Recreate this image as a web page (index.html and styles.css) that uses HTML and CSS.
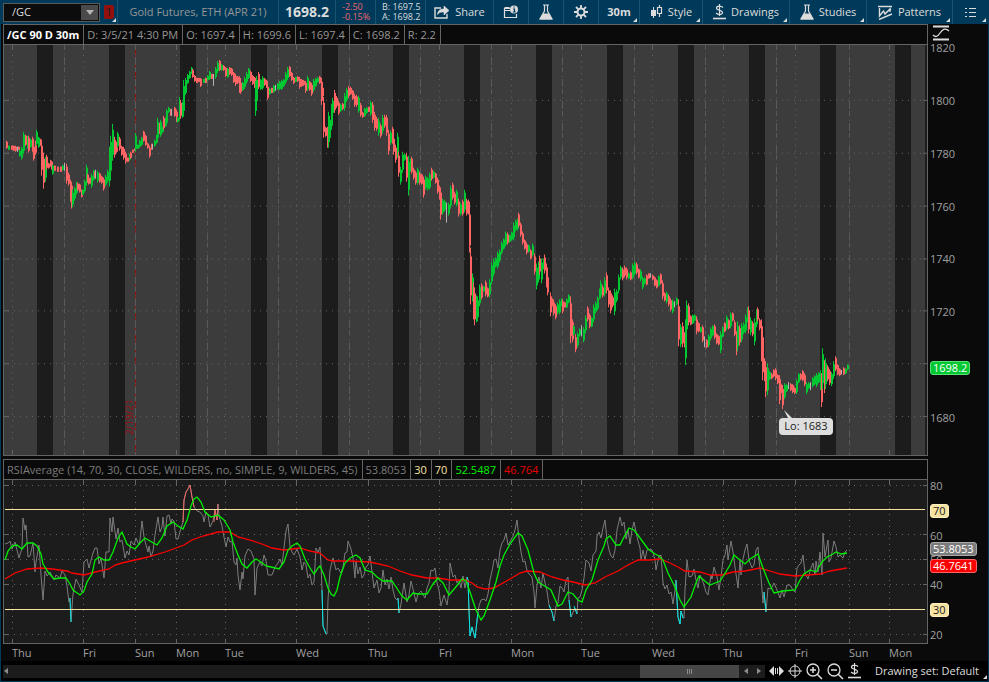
FILE: index.html
```html
<!DOCTYPE html>
<html lang="en">

<head>
    <meta charset="UTF-8">
    <meta name="viewport" content="width=device-width, initial-scale=1.0">
    <title>/GC 90 D 30m</title>
    <link rel="stylesheet" href="styles.css">
</head>

<body>

    <header class="toolbar">
        <div class="symbol-cell">
            <div class="symbol">
                <input type="text" value="/GC" aria-label="Symbol">
                <button aria-label="Symbol list"><svg width="8" height="5"><path d="M0 0h8L4 5z" fill="#b4b4b4"/></svg></button>
            </div>
            <button class="link-badge menu" aria-label="Link color 1"><span>1</span></button>
        </div>
        <div class="cell name">Gold Futures, ETH (APR 21)</div>
        <div class="cell last">1698.2</div>
        <div class="cell two-line change"><span>-2.50</span><span>-0.15%</span></div>
        <div class="cell two-line"><span>B: 1697.5</span><span>A: 1698.2</span></div>
        <button class="cell">
            <svg width="16" height="14" fill="none" stroke="#dcdcdc"><path d="M7 3H1v10h12V9" stroke-width="1.4"/><path d="M3.500 9.500C4 5 6.500 4 10 4V1l5 4.500-5 4.500V7C7 7 5.500 7 3.500 9.500z" fill="#dcdcdc" stroke-width=".6"/></svg>
            Share
        </button>
        <button class="cell" aria-label="Info">
            <svg width="16" height="14" fill="none" stroke="#dcdcdc"><path d="M7 3.500H1.500V12.500h12V9M1.500 2.500h5M1.500 5.500h6" stroke-width="1.200"/><circle cx="11" cy="4.500" r="4" fill="#dcdcdc" stroke="none"/><path d="M10 4h1.500v3M9.800 7h3M10.500 2h1.200" stroke="#003a5a" stroke-width="1.200"/></svg>
        </button>
        <button class="cell" aria-label="Lab">
            <svg width="14" height="16" fill="none" stroke="#dcdcdc"><path d="M4 1h6M5.500 1v6L1 15h12L8.500 7V1" stroke-width="1.200"/><path d="M4 10h6l3 5H1z" fill="#dcdcdc"/></svg>
        </button>
        <button class="cell" aria-label="Settings">
            <svg width="14" height="14" fill="none" stroke="#dcdcdc"><circle cx="7" cy="7" r="3.500" stroke-width="2"/><path d="M7 0v3M7 11v3M0 7h3M11 7h3M2 2l2.200 2.200M9.800 9.800L12 12M12 2L9.800 4.200M4.200 9.800L2 12" stroke-width="1.800"/></svg>
        </button>
        <button class="cell menu period">30m</button>
        <button class="cell menu">
            <svg width="13" height="14" fill="none" stroke="#dcdcdc"><path d="M3.500 2v11" stroke-width="1"/><path d="M1 5h5v6H1z" fill="#dcdcdc" stroke="none"/><path d="M9.500 0v2M9.500 9v3M7.500 2.500h4v6h-4z" stroke-width="1.200"/></svg>
            Style
        </button>
        <button class="cell menu">
            <svg width="13" height="16" fill="none" stroke="#dcdcdc"><path d="M10 3.500C8 1.500 3.500 1.500 3.500 4c0 3 6 1.500 6 4.500 0 2.500-4.500 2.500-6.500.5M6.500 0v12" stroke-width="1.200"/><path d="M0 14.500h13" stroke-width="1.600"/></svg>
            Drawings
        </button>
        <button class="cell menu">
            <svg width="14" height="16" fill="none" stroke="#dcdcdc"><path d="M4 1h6M5.500 1v6L1 15h12L8.500 7V1" stroke-width="1.200"/><path d="M4 10h6l3 5H1z" fill="#dcdcdc"/></svg>
            Studies
        </button>
        <button class="cell menu">
            <svg width="15" height="15" fill="none" stroke="#dcdcdc"><path d="M0 1.500h14M1 14.500L14 9M1.500 3v8l4-5 1.500 3 5-5v3M8 7.500L13 4" stroke-width="1.400"/></svg>
            Patterns
        </button>
        <button class="cell menu" aria-label="List">
            <svg width="12" height="11" stroke="#dcdcdc"><path d="M0 1.500h2M4 1.500h7M0 5.500h2M4 5.500h7M0 9.500h2M4 9.500h7" stroke-width="1.200"/></svg>
        </button>
    </header>

    <main class="charts">

        <section class="pane price-pane">
            <div class="frame">
                <div class="info">
                    <span class="title">/GC 90 D 30m</span>
                    <span>D: 3/5/21 4:30 PM</span>
                    <span>O: 1697.4</span>
                    <span>H: 1699.6</span>
                    <span>L: 1697.4</span>
                    <span>C: 1698.2</span>
                    <span>R: 2.2</span>
                </div>
                <div class="plot">
                    <svg id="price" viewBox="4 45 923 411" preserveAspectRatio="none" role="img" aria-label="Price chart"></svg>
                    <div class="low-tip">
                        <svg width="8" height="8"><path d="M0 0l8 8H4z" fill="#dedede"/></svg>
                        <span>Lo: 1683</span>
                    </div>
                </div>
            </div>
            <div class="axis price-axis">
                <svg width="20" height="17" fill="none" stroke="#dcdcdc"><path d="M3 2.500h16M3 15.500h16" stroke-width="2"/><path d="M3 11c3 3 5 1 7-2s5-6 9-2" stroke-width="1.300"/></svg>
                <ul>
                    <li>1820</li>
                    <li>1800</li>
                    <li>1780</li>
                    <li>1760</li>
                    <li>1740</li>
                    <li>1720</li>
                    <li class="hidden">1700</li>
                    <li>1680</li>
                </ul>
                <span class="tag last-tag">1698.2</span>
            </div>
        </section>

        <section class="pane rsi-pane">
            <div class="frame">
                <div class="info">
                    <span class="study">RSIAverage (14, 70, 30, CLOSE, WILDERS, no, SIMPLE, 9, WILDERS, 45)</span>
                    <span class="study">53.8053</span>
                    <span class="level">30</span>
                    <span class="level">70</span>
                    <span class="fast">52.5487</span>
                    <span class="slow">46.764</span>
                </div>
                <div class="plot">
                    <svg id="rsi" viewBox="4 480 923 163" preserveAspectRatio="none" role="img" aria-label="RSI chart"></svg>
                </div>
            </div>
            <div class="axis rsi-axis">
                <ul>
                    <li>80</li>
                    <li><span class="tag level-tag">70</span></li>
                    <li>60</li>
                    <li>50</li>
                    <li>40</li>
                    <li><span class="tag level-tag">30</span></li>
                    <li>20</li>
                </ul>
                <span class="tag rsi-tag">53.8053</span>
                <span class="tag slow-tag">46.7641</span>
            </div>
        </section>

        <div class="time-axis">
            <span></span>
            <span>Thu</span>
            <span>Fri</span>
            <span>Sun</span>
            <span>Mon</span>
            <span>Tue</span>
            <span>Wed</span>
            <span>Thu</span>
            <span>Fri</span>
            <span>Mon</span>
            <span>Tue</span>
            <span>Wed</span>
            <span>Thu</span>
            <span>Fri</span>
            <span>Sun</span>
            <span>Mon</span>
        </div>
    </main>

    <footer class="bottom">
        <div class="scroll">
            <button aria-label="Scroll to start"><svg width="4" height="6"><path d="M4 0v6L0 3z" fill="#8c8c8c"/></svg></button>
            <div class="thumb"><svg width="6" height="5" stroke="#8c8c8c"><path d="M.5 0v5M2.500 0v5M4.500 0v5"/></svg></div>
            <button aria-label="Scroll left"><svg width="4" height="6"><path d="M4 0v6L0 3z" fill="#8c8c8c"/></svg></button>
            <button aria-label="Scroll right"><svg width="4" height="6"><path d="M0 0v6l4-3z" fill="#8c8c8c"/></svg></button>
        </div>
        <div class="tools">
            <button aria-label="Expand"><svg width="15" height="10" fill="#dcdcdc"><path d="M5 0v10L0 5zM10 0v10l5-5zM6 2h1v6H6zM8 2h1v6H8z"/></svg></button>
            <button aria-label="Crosshair"><svg width="14" height="14" fill="none" stroke="#dcdcdc"><circle cx="7" cy="7" r="5"/><path d="M7 0v14M0 7h14"/></svg></button>
            <button aria-label="Zoom in"><svg width="17" height="17" fill="none" stroke="#dcdcdc"><circle cx="7" cy="7" r="6" stroke-width="1.300"/><path d="M4 7h6M7 4v6M11 11l5 5" stroke-width="1.500"/></svg></button>
            <button aria-label="Zoom out"><svg width="17" height="17" fill="none" stroke="#dcdcdc"><circle cx="7" cy="7" r="6" stroke-width="1.300"/><path d="M4 7h6M11 11l5 5" stroke-width="1.500"/></svg></button>
            <button aria-label="Drawings"><svg width="13" height="16" fill="none" stroke="#dcdcdc"><path d="M10 3.500C8 1.500 3.500 1.500 3.500 4c0 3 6 1.500 6 4.500 0 2.500-4.500 2.500-6.500.5M6.500 0v12" stroke-width="1.200"/><path d="M0 14.500h13" stroke-width="1.600"/></svg></button>
        </div>
        <button class="drawing-set menu">Drawing set: Default</button>
    </footer>

    <script src="script.js"></script>
</body>

</html>
```

FILE: styles.css
```css
* {
    margin: 0;
    padding: 0;
    box-sizing: border-box;
}

body {
    display: flex;
    flex-direction: column;
    height: 100vh;
    padding: 0 1px 1px;
    background-color: #003a5a;
    color: #dcdcdc;
    font-family: "Open Sans", sans-serif;
    font-size: 11px;
    line-height: 14px;
    overflow: hidden;
}

button,
input {
    border: none;
    background: none;
    color: inherit;
    font: inherit;
}

svg {
    display: block;
    flex: none;
}

/* small corner mark on buttons that open a menu */
.menu {
    position: relative;
}

.menu::after {
    content: "";
    position: absolute;
    right: 2px;
    bottom: 2px;
    border-left: 4px solid transparent;
    border-bottom: 4px solid #dcdcdc;
}

.toolbar {
    display: grid;
    grid-template-columns: 116fr 161fr 57fr 40fr 50fr 68fr 35fr 35fr 35fr 41fr 63fr 87fr 77fr 86fr 36fr;
    flex: none;
    height: 24px;
}

.toolbar > * {
    min-width: 0;
}

.symbol-cell {
    display: flex;
    align-items: center;
    gap: 4px;
    padding-left: 2px;
}

.symbol {
    display: flex;
    width: 97px;
    height: 19px;
    padding: 1px;
    border: 1px solid #5a5a5a;
    background-color: #0c0c0c;
}

.symbol input {
    flex: 1;
    min-width: 0;
    padding-left: 7px;
}

.symbol button {
    display: flex;
    align-items: center;
    justify-content: center;
    width: 17px;
    background-color: #4a4a4a;
}

.link-badge {
    align-self: stretch;
    width: 12px;
}

.link-badge span {
    display: block;
    width: 10px;
    border-radius: 2px;
    background-color: #960f0f;
    color: #1c1c1c;
}

.link-badge::after {
    right: 0;
}

.cell {
    display: flex;
    align-items: center;
    justify-content: center;
    gap: 5px;
    border-left: 1px solid #1a5271;
    white-space: nowrap;
}

.name {
    color: #969696;
}

.last {
    font-size: 14px;
    font-weight: 700;
}

.two-line {
    flex-direction: column;
    align-items: flex-start;
    gap: 0;
    padding-left: 6px;
    font-size: 9px;
    line-height: 10px;
}

.change {
    color: #f0646e;
}

.period {
    font-weight: 700;
}

.charts {
    display: flex;
    flex: 1;
    flex-direction: column;
    min-height: 0;
    padding-left: 2px;
    background-color: #0a0a0a;
}

.pane {
    display: grid;
    grid-template-columns: 1fr 60px;
    min-height: 0;
}

.price-pane {
    flex: 432 1 0;
    margin-bottom: 3px;
}

.rsi-pane {
    flex: 185 1 0;
}

.frame {
    display: flex;
    flex-direction: column;
    min-width: 0;
    min-height: 0;
    border: 1px solid #646464;
}

.info {
    display: flex;
    flex: none;
    height: 20px;
    border-bottom: 1px solid #646464;
    color: #969696;
    line-height: 19px;
    white-space: nowrap;
}

.info span {
    padding: 0 4px 0 3px;
    border-right: 1px solid #646464;
}

.info .title {
    color: #fff;
    font-weight: 700;
}

.info .study {
    color: #7c7c7c;
}

.info .level {
    color: #f7e3a1;
}

.info .fast {
    color: #00f000;
}

.info .slow {
    color: #e60000;
}

.plot {
    position: relative;
    flex: 1;
    min-height: 0;
}

.plot > svg {
    width: 100%;
    height: 100%;
}

.price-pane .plot {
    background-color: #3c3c3c;
}

.rsi-pane .plot {
    background-color: #1c1c1c;
}

.plot text {
    fill: #960f0f;
    font-size: 10px;
}

.low-tip {
    position: absolute;
    left: 84%;
    top: 89%;
}

.low-tip svg {
    margin-left: 5px;
}

.low-tip span {
    display: block;
    padding: 1px 5px 2px;
    border-radius: 4px;
    background-color: #dedede;
    color: #1c1c1c;
}

.axis {
    position: relative;
    display: flex;
    flex-direction: column;
    min-height: 0;
    padding-left: 2px;
    color: #a0a0a0;
}

.axis ul {
    display: flex;
    flex: 1;
    flex-direction: column;
    justify-content: space-between;
    list-style: none;
}

.price-axis {
    padding-bottom: 31px;
}

.rsi-axis {
    padding: 20px 0 2px 2px;
}

.hidden {
    visibility: hidden;
}

.axis li {
    height: 14px;
}

.tag {
    display: block;
    width: fit-content;
    padding: 0 2px;
    border: 1px solid;
    border-radius: 3px;
    line-height: 12px;
}

.last-tag {
    position: absolute;
    top: 78%;
    background-color: #00c832;
    border-color: #5ade78;
    color: #fff;
}

.level-tag {
    background-color: #f7e3a1;
    border-color: #fff0c0;
    color: #1c1c1c;
}

.rsi-tag {
    position: absolute;
    top: 45%;
    background-color: #7c7c7c;
    border-color: #a8a8a8;
    color: #fff;
}

.slow-tag {
    position: absolute;
    top: 54%;
    background-color: #fa0000;
    border-color: #ff6464;
    color: #fff;
}

.time-axis {
    display: grid;
    flex: none;
    grid-template-columns: 9fr 71fr 52fr 41fr 49fr 71fr 72fr 71fr 72fr 70fr 71fr 71fr 72fr 54fr 40fr 99fr;
    height: 17px;
    color: #a0a0a0;
    line-height: 18px;
}

.time-axis span {
    min-width: 0;
}

.bottom {
    display: flex;
    flex: none;
    align-items: center;
    height: 20px;
    padding-left: 2px;
    background-color: #000;
}

.scroll {
    display: flex;
    flex: 1;
    height: 13px;
    background-color: #1c1c1c;
}

.scroll button {
    display: flex;
    align-items: center;
    justify-content: center;
    width: 13px;
}

.scroll button:first-child {
    width: 6px;
}

.thumb {
    display: flex;
    align-items: center;
    justify-content: center;
    width: 13%;
    margin-left: auto;
    background-color: #464646;
}

.tools {
    display: flex;
    align-items: center;
    gap: 4px;
    padding: 0 14px 0 4px;
}

.drawing-set {
    height: 20px;
    padding-right: 9px;
}

.drawing-set::after {
    right: 1px;
}
```

FILE: script.js
```javascript
const UP = '#00c832';
const DOWN = '#ff6464';
const FLAT = '#b4b4b4';

// x high low color (g = up, r = down, w = unchanged)
const bars = `
6 141 149 r,8 146 150 g,11 146 150 r,13 146 151 r,15 146 152 r,17 147 152 w,18 147 150 r,19 150 157 g,21 147 160 g,
23 132 154 g,25 135 146 r,27 136 149 g,28 136 153 r,30 139 148 g,32 137 152 r,33 145 161 r,35 141 155 r,36 130 146 g,
38 137 148 g,40 139 146 r,41 140 176 r,43 153 189 r,45 157 182 g,46 155 170 r,48 163 169 r,50 160 167 r,51 161 170 r,
52 165 175 g,54 166 171 r,57 167 172 r,60 167 172 r,62 165 171 g,64 163 171 w,66 164 184 r,68 173 186 r,70 180 202 r,
71 182 209 r,72 190 208 g,74 187 201 g,76 182 195 g,77 183 191 r,79 184 193 r,81 190 198 r,82 190 195 g,84 180 193 g,
86 165 186 g,87 174 183 r,88 177 185 r,90 178 184 r,91 174 188 g,93 170 181 g,94 172 178 r,95 170 179 w,97 171 183 g,
99 173 183 r,101 176 184 r,103 178 191 r,105 175 187 g,107 170 183 g,109 147 187 g,110 136 177 g,112 124 161 g,
114 137 158 r,116 142 153 r,117 132 148 g,119 137 151 r,121 146 156 r,123 147 160 r,125 152 164 r,127 158 162 r,
129 154 161 g,130 152 159 r,132 150 153 r,134 149 151 r,135 133 152 g,137 145 149 g,139 140 148 g,141 137 146 g,
143 131 142 r,145 135 146 r,147 143 149 r,149 146 158 r,151 144 150 r,152 144 150 w,154 140 147 g,156 135 144 g,
157 118 142 g,159 123 134 r,160 120 137 g,162 127 133 g,163 116 130 r,165 118 127 g,166 109 125 g,168 107 113 g,
170 109 116 r,171 109 116 w,174 107 117 r,176 110 122 r,177 117 123 g,179 97 121 g,180 100 119 r,182 102 118 g,
183 80 117 g,185 78 95 g,187 74 84 g,189 71 79 g,191 67 74 g,192 69 78 r,194 75 82 r,196 78 83 r,198 78 82 r,
200 78 87 r,203 79 83 g,205 78 83 r,207 75 81 g,209 71 80 g,211 74 79 r,213 74 86 w,215 67 79 g,217 61 73 g,
219 60 71 r,221 64 71 g,223 65 71 r,225 67 77 r,227 68 78 g,229 67 75 r,231 68 76 r,233 72 83 r,235 74 86 r,
237 76 84 r,239 76 93 r,240 81 94 r,242 82 91 g,244 77 89 g,246 72 84 g,248 68 79 g,250 71 82 r,252 75 85 r,
254 77 88 r,255 81 116 g,256 76 105 g,258 72 89 r,260 79 90 g,262 76 90 g,264 78 86 r,266 80 88 r,267 85 100 r,
269 88 95 g,271 88 93 r,273 85 93 g,275 85 91 w,277 83 90 g,279 81 90 g,281 80 90 g,283 79 87 g,285 72 84 g,
287 67 80 g,289 66 77 r,291 72 81 r,293 77 84 r,295 77 82 g,297 76 82 r,299 77 89 r,301 79 87 r,303 80 86 r,
305 81 93 r,307 76 91 g,309 81 91 r,311 83 96 r,313 79 92 g,315 78 87 g,317 77 83 g,319 76 84 r,321 78 105 r,
322 86 98 r,323 97 138 r,325 127 137 r,327 127 148 r,328 112 148 g,329 116 142 g,331 104 130 g,332 98 116 g,
334 90 113 r,336 96 108 r,338 101 115 r,340 104 112 g,342 103 110 r,344 93 111 g,346 88 102 g,348 86 98 r,
350 87 95 r,352 90 100 r,354 94 107 r,356 95 107 r,358 96 113 g,360 103 117 r,362 112 118 r,364 108 117 g,
366 107 114 g,368 107 112 r,370 101 116 g,372 102 123 r,374 112 131 r,376 117 131 r,378 118 136 g,380 124 138 r,
382 115 134 g,384 115 128 r,386 115 136 r,388 130 155 r,390 131 145 g,392 127 144 r,393 136 155 r,395 145 163 r,
397 133 158 g,398 152 177 r,400 167 185 g,402 152 173 g,404 154 161 g,406 153 182 r,408 156 196 g,410 159 172 g,
411 157 174 r,413 168 180 r,415 171 185 r,417 168 185 g,419 172 185 r,421 174 185 r,423 177 198 r,425 176 190 g,
427 177 191 g,429 173 190 g,431 168 181 r,433 171 179 g,435 173 184 r,437 178 194 r,439 186 200 r,440 188 220 r,
442 199 215 g,444 200 212 g,446 203 223 w,448 203 216 g,450 186 209 g,452 183 200 r,454 192 205 r,456 190 207 g,
458 199 217 r,460 203 216 g,462 200 216 r,464 190 213 g,466 199 216 r,468 200 215 r,469 208 253 r,470 248 305 r,
472 274 302 g,473 283 320 r,474 288 326 r,476 296 323 g,477 297 322 g,479 285 307 g,481 284 300 r,483 287 292 g,
485 281 297 r,487 288 298 r,489 280 298 g,491 263 285 g,493 259 277 g,495 258 268 g,497 252 269 g,499 250 263 g,
501 242 255 g,503 239 250 g,505 232 247 g,507 233 245 r,509 235 243 g,511 232 241 g,513 223 241 g,515 220 232 g,
517 219 231 g,518 213 228 r,520 223 237 r,522 232 245 r,524 240 250 r,526 243 255 r,528 245 253 g,530 250 260 r,
532 244 257 g,534 254 275 r,536 264 290 g,538 262 283 g,539 256 275 r,541 259 284 g,543 259 270 g,544 255 274 r,
546 264 288 r,547 275 296 r,550 293 317 r,552 299 307 r,553 301 316 r,555 305 320 r,557 303 315 g,559 300 315 g,
561 299 307 g,562 300 314 r,564 303 308 r,566 299 309 g,568 295 304 g,570 297 344 r,572 320 343 r,573 326 336 g,
575 335 353 r,577 333 348 g,579 329 337 g,581 326 337 w,583 328 343 g,585 316 334 g,587 307 322 r,589 314 329 r,
591 318 328 g,593 305 323 g,595 302 314 g,597 297 311 g,599 289 300 g,600 281 299 g,602 286 298 r,604 278 297 g,
606 273 294 r,608 288 308 r,610 291 314 r,612 296 308 r,614 289 316 g,616 290 303 g,618 275 294 g,620 266 280 g,
622 268 281 r,624 266 278 r,626 268 280 r,628 273 280 g,630 272 281 r,632 264 280 g,634 262 276 g,636 263 275 r,
638 269 279 r,640 270 282 g,642 277 290 g,644 278 285 g,646 275 286 r,648 274 279 r,650 274 278 w,652 275 281 r,
654 277 287 r,656 280 289 r,658 276 287 g,660 274 285 r,662 281 300 r,664 293 302 r,666 292 304 g,668 295 307 r,
670 299 312 r,672 300 314 g,674 302 308 w,676 298 306 g,678 300 347 r,680 325 348 g,682 323 348 r,684 333 348 r,
685 320 366 g,686 301 335 g,688 304 326 r,690 316 326 r,692 315 325 g,694 315 322 g,696 317 335 r,698 323 333 r,
700 328 333 g,702 326 343 r,704 337 348 w,706 340 349 r,708 335 348 g,710 328 341 g,712 326 337 g,714 325 340 r,
716 334 345 r,718 336 346 r,720 332 354 g,722 327 338 g,724 323 333 r,726 316 331 g,728 320 330 r,730 313 329 g,
732 313 322 r,734 321 337 r,736 332 356 r,737 322 352 g,739 326 346 r,741 324 343 g,743 323 335 g,745 315 334 g,
747 308 323 g,748 307 334 r,750 318 336 g,752 322 337 r,754 319 346 g,756 310 328 g,757 308 322 r,759 319 331 r,
761 320 362 r,762 330 381 r,764 359 382 r,765 362 398 r,767 364 396 g,769 372 381 g,771 374 380 r,773 370 378 r,
775 369 381 r,777 375 385 r,779 376 405 r,781 385 394 r,782 386 410 r,784 384 400 g,786 385 393 g,788 383 390 w,
790 384 392 r,792 385 394 r,794 388 395 r,796 380 395 g,798 374 384 g,800 374 381 r,802 371 382 r,804 374 387 r,
806 383 395 g,808 383 390 g,810 383 391 w,812 378 388 g,814 376 386 g,816 374 388 g,818 373 384 g,820 371 391 g,
821 374 408 r,822 349 390 g,824 361 394 r,825 359 390 g,827 366 382 r,829 370 386 r,831 373 387 g,833 362 380 g,
835 357 372 r,837 365 376 r,839 369 377 r,841 371 375 w,843 368 376 r,845 369 375 g,847 365 371 g`;

const rsi = `5,544 8,543 10,541 12,549 15,542 17,550 19,558 22,548 23,518 25,530 26,525 28,557 30,556 33,543 35,572 36,562
39,545 41,575 43,600 45,571 47,576 50,572 54,580 56,575 60,578 62,571 65,575 67,586 69,602 70,598 71,622 73,594 76,579
79,585 82,592 84,562 87,559 89,568 91,560 93,553 95,548 97,548 99,564 101,558 104,578 106,552 109,552 110,518 112,532
113,517 116,539 118,528 120,542 122,540 125,558 127,551 129,555 131,541 134,545 136,538 139,545 140,540 142,521
144,537 146,545 148,552 149,546 151,557 153,551 155,535 158,517 160,532 162,527 163,517 165,536 167,516 169,515
171,524 172,519 174,521 176,539 178,539 181,528 183,522 184,500 186,492 188,489 190,485 192,497 194,507 197,511
200,512 203,516 204,522 206,512 208,515 210,527 213,521 215,510 217,520 218,504 219,516 222,526 224,537 226,547
228,537 230,542 232,541 234,562 236,565 237,558 238,575 240,590 242,572 243,579 245,556 248,549 251,551 254,559
255,595 257,568 260,562 262,566 264,555 266,561 268,575 272,575 275,567 278,563 280,559 282,565 284,548 286,531
288,524 290,547 292,552 294,555 297,549 300,557 302,570 304,562 306,565 308,578 310,574 312,585 314,582 316,548
318,552 320,547 321,565 322,590 323,626 326,634 327,634 328,600 330,570 333,558 336,570 338,568 341,573 343,567
345,553 347,552 348,541 351,549 353,558 355,578 356,561 358,574 360,567 362,578 364,575 366,567 368,565 370,556
372,572 374,588 377,580 379,593 381,588 383,570 385,585 387,579 389,589 391,577 393,590 395,598 397,600 398,598
399,613 401,604 404,583 407,602 409,595 411,581 413,589 416,602 418,594 421,591 425,598 427,588 429,583 431,570
433,571 435,568 437,583 439,590 441,606 444,595 447,605 449,591 450,563 453,577 455,575 457,583 459,580 461,588
463,576 465,588 467,577 468,580 469,610 470,636 472,627 475,638 478,612 479,606 481,600 484,599 486,601 488,594
490,580 492,571 494,560 496,559 498,568 500,550 502,543 504,540 506,533 508,545 511,540 513,536 515,530 517,520
519,538 521,552 523,562 525,561 527,571 529,574 532,577 534,592 535,608 537,585 539,577 541,588 543,573 545,583
547,591 549,605 552,612 554,621 556,606 558,603 560,586 562,588 564,592 566,580 568,577 569,600 571,617 575,608
577,614 578,598 580,597 582,590 584,578 586,560 589,563 591,571 593,555 596,551 597,536 599,532 601,538 603,528
605,520 607,540 609,550 611,556 613,558 615,550 617,530 620,517 622,526 624,522 626,539 628,530 630,544 632,530
634,522 636,532 638,541 640,548 641,560 643,550 645,560 647,550 651,549 653,552 655,560 656,570 659,556 661,555
663,583 665,589 667,585 669,594 671,592 673,604 675,590 676,580 677,600 678,617 680,624 681,611 683,618 684,618
685,590 687,560 689,577 692,576 694,569 696,580 698,588 700,575 703,582 706,592 708,595 711,575 712,579 714,567
717,577 719,590 721,577 723,560 725,555 727,545 728,560 731,541 733,552 735,567 738,588 740,560 741,575 743,559
745,550 747,544 749,560 752,568 754,565 756,550 758,547 759,560 761,577 763,603 764,592 766,612 768,588 771,589
774,583 777,590 780,598 782,590 784,597 787,585 790,585 793,590 795,592 797,568 799,565 801,563 803,555 805,573
808,579 811,568 813,563 815,575 816,561 818,572 820,552 822,575 823,533 825,557 828,540 829,562 831,558 834,541
836,547 838,557 840,555 843,558 845,552 847,550`;

const overbought = ['183,522 184,500 186,492 188,489 190,485 192,497 194,507', '206,512 208,515', '214,522 215,510 217,520 218,504'];
const oversold = ['70,598 71,622', '322,590 323,626 326,634', '398,598 399,613', '467,577 468,580 469,610 470,636 472,627 475,638 478,612',
    '549,605 552,612 554,621', '569,600 571,617', '574,606 577,614', '676,580 677,600 678,617 680,624 681,611 683,618', '764,592 766,612'];

const fast = `5,560 8,551 12,546 17,545 22,549 27,543 33,543 37,546 41,554 43,564 48,572 54,579 60,578 66,578 70,584
73,590 80,595 84,591 87,582 92,574 95,560 99,557 104,560 109,560 113,552 118,538 122,532 127,544 131,547 135,549
140,543 145,538 150,541 157,545 162,538 167,526 173,522 178,526 183,529 187,520 191,506 194,499 197,497 201,502
205,512 211,517 218,515 224,520 230,530 233,542 238,555 242,564 247,568 252,562 256,559 261,562 266,566 271,567
279,569 284,562 288,550 292,546 297,543 300,546 305,559 310,568 314,574 318,568 320,566 324,575 328,588 331,594
334,596 337,590 340,577 345,563 350,558 356,555 360,558 365,570 372,572 377,577 383,581 392,581 398,590 402,596
407,600 413,593 418,594 427,594 433,584 438,578 443,583 449,595 455,588 462,579 466,581 470,592 476,610 481,620
484,616 490,600 496,582 500,566 504,555 510,544 518,533 522,536 528,550 534,573 538,582 543,585 551,590 558,606
562,604 568,592 573,594 578,600 582,602 586,590 592,580 598,560 604,546 606,539 610,536 616,545 620,545 624,537
629,528 634,530 640,538 648,549 655,554 659,556 663,560 668,573 674,585 680,600 684,607 691,597 696,583 699,576
706,582 710,585 720,581 724,575 730,565 734,555 740,560 745,564 750,559 758,554 763,568 769,583 774,593 783,591
795,590 800,580 804,574 810,570 816,572 822,562 827,557 833,554 836,552 841,554 847,553`;

const slow = `5,579 15,573 27,569 41,568 52,569 67,571 72,573 84,575 95,572 109,569 115,565 122,563 135,560 148,557
165,552 176,548 184,545 192,540 203,536 218,532 230,532 238,537 250,540 262,544 272,548 284,550 300,548 310,551
320,553 328,560 333,561 350,561 370,562 388,566 400,571 412,575 427,578 438,578 450,580 465,580 472,583 477,587
485,589 494,588 503,583 510,579 520,573 527,571 540,572 552,577 563,580 573,582 585,585 595,583 605,577 618,571
628,565 638,560 650,560 660,559 670,563 678,567 685,571 700,572 710,575 722,575 733,572 745,571 760,568 770,571
780,574 795,576 808,575 820,574 830,571 847,568`;

const nights = [37, 109, 180, 251, 322, 393, 464, 536, 607, 678, 749, 820, 895];
const days = [12, 83, 176, 225, 296, 368, 439, 511, 581, 652, 723, 795, 889];
const midnights = [64, 135, 207, 278, 349, 420, 491, 562, 634, 705, 776, 849];

function add(svg, tag, attrs) {
    const el = document.createElementNS('http://www.w3.org/2000/svg', tag);
    for (const key in attrs) {
        el.setAttribute(key, attrs[key]);
    }
    svg.appendChild(el);
    return el;
}

function line(svg, d, color, more) {
    return add(svg, 'path', { d: d, stroke: color, fill: 'none', 'shape-rendering': 'crispEdges', ...more });
}

function drawPrice() {
    const svg = document.getElementById('price');

    nights.forEach(x => add(svg, 'rect', { x: x, y: 45, width: 16, height: 411, fill: '#1c1c1c' }));
    add(svg, 'rect', { x: 925, y: 45, width: 2, height: 411, fill: '#1c1c1c' });

    // grid
    [100, 153, 206, 259, 311, 364, 417].forEach(y => {
        line(svg, `M8 ${y}.5H923`, '#646464', { 'stroke-dasharray': '1 5' });
        line(svg, `M4 ${y}.5h5M923 ${y}.5h4`, '#646464');
    });
    days.forEach(x => {
        line(svg, `M${x}.5 55V442`, '#646464', { 'stroke-dasharray': '1 5' });
        line(svg, `M${x}.5 451v5M${x}.5 45v5`, '#646464');
    });
    line(svg, 'M135.500 45V456', '#960f0f');
    midnights.forEach(x => line(svg, `M${x}.5 45V456`, '#5a5a5a', { 'stroke-dasharray': '5 4 1 2 8 2' }));

    const label = add(svg, 'text', { transform: 'translate(133 436) rotate(-90)' });
    label.textContent = '2/19/21';

    // wick over the full range, body over the middle of it
    const colors = { g: UP, r: DOWN, w: FLAT };
    bars.trim().split(',').forEach(bar => {
        const [x, high, low, c] = bar.trim().split(' ');
        const pad = Math.floor((low - high) / 6);
        const width = c === 'w' ? 1 : 2;
        line(svg, `M${x}.5 ${high}V${low}`, colors[c]);
        add(svg, 'rect', { x: x, y: +high + pad, width: width, height: low - high - 2 * pad, fill: colors[c] });
    });
}

function drawRsi() {
    const svg = document.getElementById('rsi');

    [485, 534, 559, 584, 634].forEach(y => {
        line(svg, `M8 ${y}.5H923`, '#646464', { 'stroke-dasharray': '1 5' });
        line(svg, `M4 ${y}.5h5M923 ${y}.5h4`, '#646464');
    });
    [...days, 135, 849].forEach(x => {
        line(svg, `M${x}.5 490V633`, '#646464', { 'stroke-dasharray': '1 5' });
        line(svg, `M${x}.5 480v5M${x}.5 639v4`, '#646464');
    });

    add(svg, 'polyline', { points: rsi, fill: 'none', stroke: '#7c7c7c' });
    overbought.forEach(p => add(svg, 'polyline', { points: p, fill: 'none', stroke: '#f06464' }));
    oversold.forEach(p => add(svg, 'polyline', { points: p, fill: 'none', stroke: '#00e6e6' }));
    line(svg, 'M5 509.500H925M5 609.500H925', '#f7e3a1');
    add(svg, 'polyline', { points: slow, fill: 'none', stroke: '#ff0000', 'stroke-width': 1.3 });
    add(svg, 'polyline', { points: fast, fill: 'none', stroke: '#00f000', 'stroke-width': 1.3 });
}

drawPrice();
drawRsi();
```
